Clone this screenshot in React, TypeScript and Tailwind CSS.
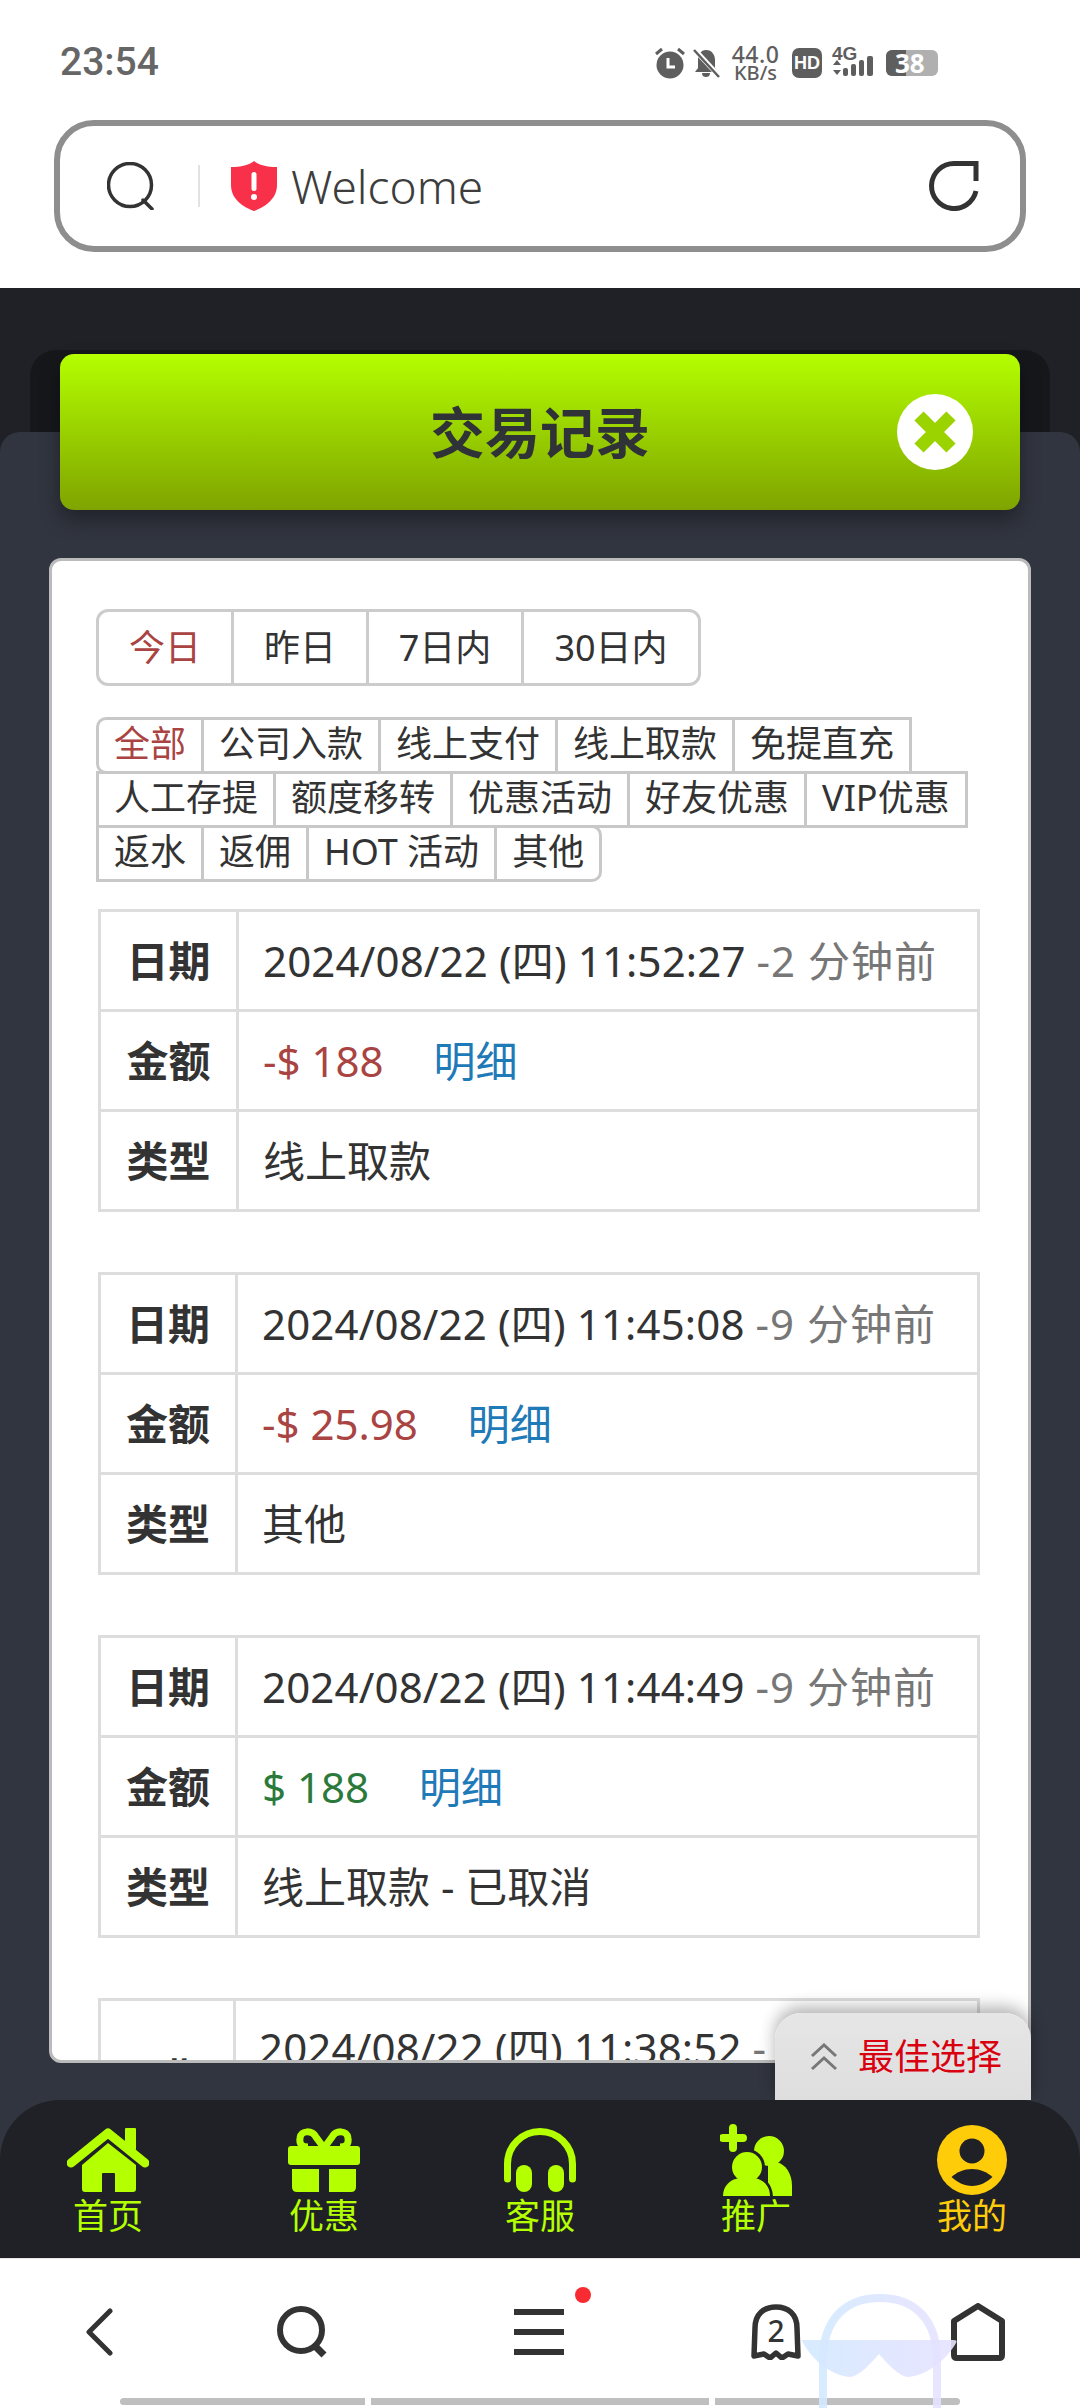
import React from "react";

const G = "#b4ff00";
const DARK = "#1f2126";

function Rec({ first, pad, date, ago, ago2, amount, amtClass, gap, type }: { first: number; pad: number; date: string; ago: string; ago2?: string; amount: string; amtClass: string; gap: number; type: string }) {
  const th = "border-[3px] border-[#dddddd] font-bold text-center text-[#333333] h-[100px] p-0";
  const td = "border-[3px] border-[#dddddd] text-left text-[#333333] h-[100px] py-[18px] leading-[58px] whitespace-nowrap overflow-hidden";
  return (
    <table className="w-[882px] ml-[2px] mb-[60px] table-fixed border-collapse text-[42px]">
      <colgroup>
        <col style={{ width: first }} />
        <col />
      </colgroup>
      <tbody>
        <tr>
          <th className={th}>日期</th>
          <td className={td} style={{ paddingLeft: pad }}>
            <span className="tracking-[0.15px]">{date}</span> <span className="text-[#777777] tracking-[1px]">{ago}{ago2 ? <br /> : null}{ago2}</span>
          </td>
        </tr>
        <tr>
          <th className={th}>金额</th>
          <td className={td} style={{ paddingLeft: pad }}>
            <span className={amtClass}>{amount}</span>
            <span className="text-[#1f7ab8]" style={{ marginLeft: gap }}>明细</span>
          </td>
        </tr>
        <tr>
          <th className={th}>类型</th>
          <td className={td} style={{ paddingLeft: pad }}>{type}</td>
        </tr>
      </tbody>
    </table>
  );
}

function Cell({ t, cls = "" }: { t: string; cls?: string }) {
  return <span className={`h-[57px] -mb-[3px] -mr-[3px] px-[15px] border-[3px] border-[#c8c8c8] text-[36px] leading-[48px] text-[#333333] whitespace-nowrap ${cls}`}>{t}</span>;
}

function NavItem({ label, children, yellow }: { label: string; children: React.ReactNode; yellow?: boolean }) {
  return (
    <div className="w-[216px] flex flex-col items-center">
      <div className="h-[72px] flex items-center justify-center">{children}</div>
      <div className={`text-[35px] leading-[38px] mt-[1px] ${yellow ? "text-[#ffcc0a]" : "text-[#b4ff00]"}`}>{label}</div>
    </div>
  );
}

export default function App() {
  return (
    <div className="w-[1080px] h-[2408px] overflow-hidden bg-white flex flex-col [font-family:'Noto_Sans','Noto_Sans_CJK_SC',sans-serif]">
      {/* status bar */}
      <div className="h-[120px] flex items-start justify-between pl-[60px] pr-[139px] pt-[38px]">
        <span className="text-[39px] leading-[48px] font-medium text-[#666666] [font-family:Roboto,sans-serif]">23:54</span>
        <div className="flex items-center h-[48px] mt-[1px]">
          <svg width="32" height="32" viewBox="0 0 32 32">
            <circle cx="16" cy="18" r="13.5" fill="#5e5e5e" />
            <path d="M2 7 L8 2 M30 7 L24 2" stroke="#5e5e5e" strokeWidth="3" />
            <path d="M14 11 V20 H21" stroke="#fff" strokeWidth="3" fill="none" />
          </svg>
          <svg className="ml-[6px]" width="29" height="30" viewBox="0 0 29 30">
            <path d="M14 2 C20 2 23 7 23 12 V20 L26 24 H3 L6 20 V12 C6 7 9 2 14 2Z M10 25 H18 C18 28 16 29 14 29 C12 29 10 28 10 25Z" fill="#5e5e5e" />
            <path d="M2 1 L28 29" stroke="#fff" strokeWidth="5" />
            <path d="M2 2 L27 29" stroke="#5e5e5e" strokeWidth="2.5" />
          </svg>
          <div className="ml-[8px] w-[53px] flex flex-col items-center text-[#5e5e5e] [font-family:'Noto_Sans',sans-serif]">
            <span className="text-[23px] leading-[20px] font-medium tracking-[0.5px]">44.0</span>
            <span className="text-[20px] leading-[18px] font-medium">KB/s</span>
          </div>
          <div className="ml-[10px] w-[30px] h-[30px] rounded-[7px] bg-[#5e5e5e] text-white text-[18px] leading-[30px] font-bold text-center [font-family:'Liberation_Sans',sans-serif]">HD</div>
          <svg className="ml-[10px]" width="45" height="32" viewBox="0 0 45 32">
            <path d="M1 18 L5 13 L9 18Z M1 23 L9 23 L5 28Z" fill="#5e5e5e" />
            <rect x="11" y="21" width="5" height="8" rx="2" fill="#5e5e5e" />
            <rect x="19" y="17" width="5" height="12" rx="2" fill="#5e5e5e" />
            <rect x="27" y="13" width="5" height="16" rx="2" fill="#5e5e5e" />
            <rect x="35" y="9" width="6" height="20" rx="2" fill="#5e5e5e" />
            <text x="0" y="13" fontSize="19" fontWeight="700" fill="#5e5e5e" fontFamily="Liberation Sans">4G</text>
          </svg>
          <div className="ml-[9px] relative w-[52px] h-[26px] rounded-[6px] bg-[#b0b0b0] overflow-hidden mr-[3px]">
            <div className="absolute left-0 top-0 bottom-0 w-[20px] bg-[#5e5e5e]" />
            <div className="relative text-white text-[26px] leading-[26px] font-bold pl-[9px] [font-family:'Noto_Sans',sans-serif]">38</div>
          </div>
        </div>
      </div>

      {/* address bar */}
      <div className="h-[168px] px-[54px]">
        <div className="h-[132px] rounded-[40px] border-[6px] border-[#8e8e8e] flex items-center pl-[47px] pr-[41px]">
          <svg width="48" height="48" viewBox="0 0 48 48" fill="none" stroke="#333" strokeWidth="3.5">
            <circle cx="23" cy="23" r="21.5" />
            <path d="M36 38 L45 47" strokeLinecap="round" />
          </svg>
          <div className="ml-[43px] w-[2px] h-[42px] bg-[#e2e2e2]" />
          <svg className="ml-[31px]" width="46" height="50" viewBox="0 0 46 50">
            <path d="M23 0 C28 4 36 6 46 6 V24 C46 38 34 46 23 50 C12 46 0 38 0 24 V6 C10 6 18 4 23 0Z" fill="#f8304a" />
            <rect x="20.5" y="11" width="5" height="19" rx="2.5" fill="#fff" />
            <circle cx="23" cy="36" r="3" fill="#fff" />
          </svg>
          <span className="ml-[14px] text-[46px] font-light text-[#3d3d3d] leading-[60px]">Welcome</span>
          <svg className="ml-auto" width="50" height="50" viewBox="0 0 50 50" fill="none" stroke="#333" strokeWidth="5">
            <path d="M47 30 A22.5 22.5 0 1 1 25 2.5 H47 V20" />
          </svg>
        </div>
      </div>

      {/* main */}
      <div className="relative bg-[#1f2126] pt-[144px] flex-1 flex flex-col">
        <div className="absolute left-[30px] right-[30px] top-[62px] h-[90px] rounded-t-[26px] bg-[#15171b]" />
        <div className="relative flex-1 flex flex-col bg-[#31353f] rounded-t-[20px]">
          <div className="relative mx-[60px] -mt-[78px] h-[156px] rounded-[14px] bg-gradient-to-b from-[#b4ff00] to-[#7fa400] shadow-[0_10px_20px_rgba(0,0,0,0.35)] flex items-center justify-center">
            <span className="text-[55px] font-bold text-[#2f3338]">交易记录</span>
            <svg className="absolute right-[47px] top-[40px]" width="76" height="76" viewBox="0 0 76 76">
              <circle cx="38" cy="38" r="38" fill="#fff" />
              <path d="M22 22 L54 54 M54 22 L22 54" stroke="#9bd300" strokeWidth="13" />
            </svg>
          </div>

          <div className="mt-[48px] mx-[49px] h-[1505px] rounded-[12px] border-[3px] border-[#bbbbbb] bg-white overflow-hidden pl-[44px] pt-[48px]">
            <div className="flex w-fit rounded-[12px] border-[3px] border-[#cccccc] h-[77px] text-[36px] text-[#333333]">
              <div className="w-[135px] flex items-center justify-center border-r-[3px] border-[#cccccc] text-[#a94442]">今日</div>
              <div className="w-[135px] flex items-center justify-center border-r-[3px] border-[#cccccc]">昨日</div>
              <div className="w-[155px] flex items-center justify-center border-r-[3px] border-[#cccccc]">7日内</div>
              <div className="w-[174px] flex items-center justify-center">30日内</div>
            </div>
            <div className="mt-[31px] flex flex-wrap w-[888px]">
              <Cell t="全部" cls="text-[#a94442] rounded-l-[10px]" />
              <Cell t="公司入款" />
              <Cell t="线上支付" />
              <Cell t="线上取款" />
              <Cell t="免提直充" />
              <Cell t="人工存提" />
              <Cell t="额度移转" />
              <Cell t="优惠活动" />
              <Cell t="好友优惠" />
              <Cell t="VIP优惠" />
              <Cell t="返水" />
              <Cell t="返佣" />
              <Cell t="HOT 活动" />
              <Cell t="其他" cls="rounded-r-[10px]" />
            </div>
            <div className="mt-[30px]">
              <Rec first={138} pad={24} date="2024/08/22 (四) 11:52:27" ago="-2 分钟前" amount="-$ 188" amtClass="text-[#a94442]" gap={50} type="线上取款" />
              <Rec first={137} pad={24} date="2024/08/22 (四) 11:45:08" ago="-9 分钟前" amount="-$ 25.98" amtClass="text-[#a94442]" gap={50} type="其他" />
              <Rec first={137} pad={24} date="2024/08/22 (四) 11:44:49" ago="-9 分钟前" amount="$ 188" amtClass="text-[#2b7a3b]" gap={50} type="线上取款 - 已取消" />
              <Rec first={135} pad={23} date="2024/08/22 (四) 11:38:52" ago="-" ago2="16 分钟前" amount="$ 188" amtClass="text-[#2b7a3b]" gap={50} type="线上取款" />
            </div>
          </div>

          {/* floating */}
          <div className="absolute right-[49px] bottom-[158px] w-[256px] h-[87px] rounded-t-[26px] bg-gradient-to-b from-[#e6e6e6] to-[#dedede] shadow-[0_-6px_16px_rgba(0,0,0,0.3)] flex items-center pl-[35px] z-10">
            <svg width="28" height="28" viewBox="0 0 28 28" fill="none" stroke="#777" strokeWidth="3">
              <path d="M2 13 L14 2 L26 13 M2 26 L14 15 L26 26" />
            </svg>
            <span className="ml-[20px] text-[36px] text-[#d9000f]">最佳选择</span>
          </div>

          <div className="mt-auto relative z-20 h-[158px] rounded-t-[60px] bg-[#1f2126] flex pt-[24px]">
            <NavItem label="首页">
              <svg width="82" height="64" viewBox="0 0 82 64" fill={G}>
                <rect x="58" y="0" width="11" height="22" rx="1" />
                <path d="M4 35 L41 5 L78 35" fill="none" stroke={G} strokeWidth="9" strokeLinecap="round" strokeLinejoin="round" />
                <path d="M15 37 L41 15 L69 37 V61 Q69 64 66 64 H48 V46 Q48 45 47 45 H36 Q35 45 35 46 V64 H18 Q15 64 15 61 Z" />
              </svg>
            </NavItem>
            <NavItem label="优惠">
              <svg width="72" height="64" viewBox="0 0 72 64" fill={G}>
                <path d="M36 20 L28 9 C24 2 13 2 12 10 C11 16 14 19 20 19 M36 20 L44 9 C48 2 59 2 60 10 C61 16 58 19 52 19" fill="none" stroke={G} strokeWidth="7" />
                <rect x="0" y="18" width="72" height="19" rx="3" />
                <path d="M4 41 H31 V64 H9 Q4 64 4 59 Z M41 41 H68 V59 Q68 64 63 64 H41 Z" />
              </svg>
            </NavItem>
            <NavItem label="客服">
              <svg width="72" height="64" viewBox="0 0 72 64" fill={G}>
                <path d="M3.5 51 V36 A32.5 32.5 0 0 1 68.5 36 V51" fill="none" stroke={G} strokeWidth="7" strokeLinecap="round" />
                <rect x="12" y="37" width="16" height="27" rx="8" />
                <rect x="44" y="37" width="16" height="27" rx="8" />
              </svg>
            </NavItem>
            <NavItem label="推广">
              <svg width="72" height="72" viewBox="0 0 72 72" fill={G}>
                <path d="M13 4 V24 M3 14 H23" stroke={G} strokeWidth="8" strokeLinecap="round" />
                <circle cx="49" cy="27" r="15" />
                <path d="M56 38 C66 40 72 50 72 62 V72 H48 V38 Z" />
                <circle cx="27" cy="43" r="18" fill={DARK} />
                <path d="M3 74 C3 62 10 55 20 54 H34 C43 55 50 62 50 74 Z" stroke={DARK} strokeWidth="6" />
                <circle cx="27" cy="43" r="15" />
                <path d="M3 72 C3 62 10 55 20 54 H34 C43 55 50 62 50 72 Z" />
              </svg>
            </NavItem>
            <NavItem label="我的" yellow>
              <svg width="70" height="70" viewBox="0 0 70 70">
                <circle cx="35" cy="35" r="35" fill="#ffcc0a" />
                <circle cx="35" cy="26" r="12.5" fill={DARK} />
                <path d="M14.5 52 C20 47 27 44 35 44 C43 44 50 47 55.5 52 C50 57 43 61 35 61 C27 61 20 57 14.5 52Z" fill={DARK} />
              </svg>
            </NavItem>
          </div>
        </div>
      </div>

      {/* browser bar */}
      <div className="relative h-[150px] bg-white border-t-[1px] border-[#e6e6e6] flex flex-col">
        <div className="flex items-center h-[56px] mt-[45px] pl-[86px]">
          <svg width="27" height="48" viewBox="0 0 27 48" fill="none" stroke="#333" strokeWidth="5" strokeLinecap="round" strokeLinejoin="round">
            <path d="M24 3 L3 24 L24 45" />
          </svg>
          <svg className="ml-[164px]" width="52" height="52" viewBox="0 0 52 52" fill="none" stroke="#333" strokeWidth="6">
            <circle cx="24" cy="24" r="21" />
            <path d="M37 39 L47 49" strokeWidth="7" />
          </svg>
          <div className="relative ml-[185px] w-[50px] flex flex-col gap-[14px]">
            <div className="h-[6px] bg-[#333333]" />
            <div className="h-[6px] bg-[#333333]" />
            <div className="h-[6px] bg-[#333333]" />
            <div className="absolute -right-[27px] -top-[22px] w-[16px] h-[16px] rounded-full bg-[#f92b32]" />
          </div>
          <div className="relative ml-[187px] w-[50px] h-[56px]">
            <svg width="50" height="56" viewBox="0 0 50 56" fill="none" stroke="#333" strokeWidth="5.5" strokeLinejoin="round">
              <path d="M3 52 L4 24 C4 10 13 3 25 3 C37 3 46 10 46 24 L47 52 L37 50 L31 54 L25 49 L19 54 L13 50 Z" />
            </svg>
            <span className="absolute left-0 right-0 top-[9px] text-center text-[30px] leading-[36px] font-medium text-[#333333]">2</span>
          </div>
          <svg className="ml-[150px]" width="54" height="58" viewBox="0 0 54 58" fill="none" stroke="#333" strokeWidth="6" strokeLinejoin="round">
            <path d="M27 3 L51 18 V52 Q51 55 48 55 H6 Q3 55 3 52 V18 Z" />
          </svg>
        </div>
        <div className="mt-auto mb-[3px] ml-[120px] flex gap-[6px] h-[7px]">
          <div className="w-[245px] rounded-l-full bg-[#bfbfbf]" />
          <div className="w-[338px] bg-[#bfbfbf]" />
          <div className="w-[245px] rounded-r-full bg-[#bfbfbf]" />
        </div>
        <svg className="absolute left-[800px] top-[35px] pointer-events-none" width="160" height="115" viewBox="0 0 160 115" fill="none">
          <defs>
            <linearGradient id="gl" x1="0" x2="1" y1="0" y2="0">
              <stop offset="0" stopColor="#d3e9ff" stopOpacity="0.9" />
              <stop offset="1" stopColor="#e6e2ff" stopOpacity="0.9" />
            </linearGradient>
          </defs>
          <path d="M23 115 V66 C23 25 46 4 80 4 C114 4 137 25 137 66 V115" stroke="url(#gl)" strokeWidth="8" />
          <path d="M2 47 Q0 46 4 46 H153 Q158 46 156 49 C146 66 128 81 108 83 C98 82 86 68 79 60 C72 68 60 82 50 83 C30 81 12 66 2 47Z" fill="url(#gl)" />
        </svg>
      </div>
    </div>
  );
}
